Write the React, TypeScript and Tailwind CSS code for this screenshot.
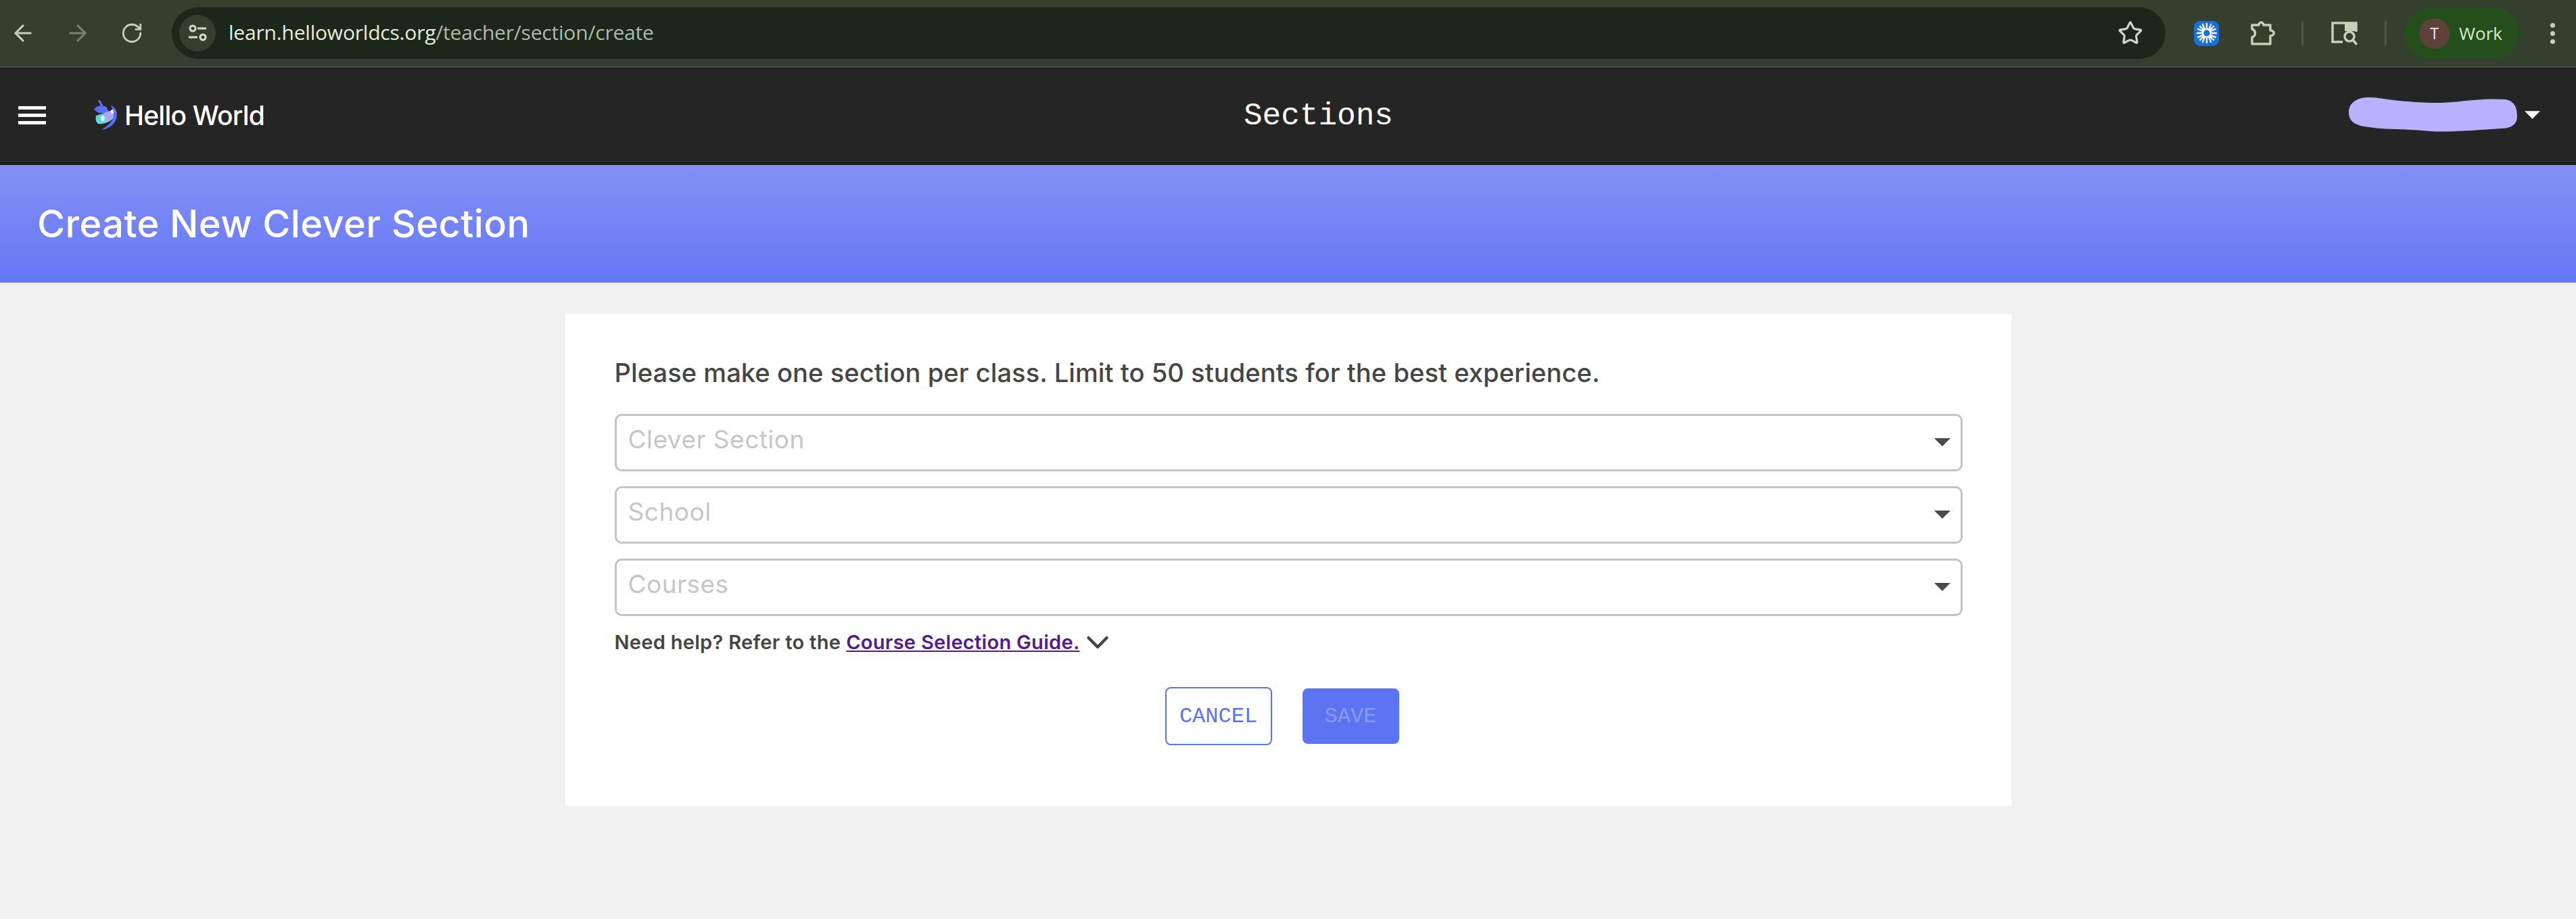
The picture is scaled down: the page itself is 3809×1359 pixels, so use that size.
import { ArrowLeft, ArrowRight, ChevronDown, RotateCw, Star } from 'lucide-react';

const SELECTS = ['Clever Section', 'School', 'Courses'];

function Caret({ className }: { className: string }) {
  return (
    <svg className={className} viewBox="0 0 24 12">
      <path d="M0 0H24L12 12Z" fill="currentColor" />
    </svg>
  );
}

function BrowserBar() {
  return (
    <div className="flex h-[100px] items-center border-b-2 border-[#474f3f] bg-[#343f2d] text-[#c3d1b8]">
      <ArrowLeft className="ml-[15px] h-[38px] w-[38px]" strokeWidth={2} />
      <ArrowRight className="ml-[43px] h-[38px] w-[38px] text-[#76846d]" strokeWidth={2} />
      <RotateCw className="ml-[44px] h-[34px] w-[34px]" strokeWidth={2} />
      {/* omnibox */}
      <div className="ml-[42px] flex h-[76px] flex-[0_0_2948px] items-center rounded-full bg-[#1d2719] pl-[11px] pr-[33px]">
        <div className="flex h-[54px] w-[54px] items-center justify-center rounded-full bg-[#343f2d]">
          <svg className="h-[30px] w-[30px]" viewBox="0 0 30 30" fill="none" stroke="#d5e0cc" strokeWidth="3">
            <circle cx="8" cy="8" r="4" />
            <path d="M15 8H28M2 21H15" />
            <circle cx="23" cy="21" r="4" />
          </svg>
        </div>
        <span className="-mt-[2px] ml-[19px] font-['Open_Sans',sans-serif] text-[30px] leading-none tracking-[-0.2px] text-[#aeb9a6]">
          <span className="text-[#e4eddc]">learn.helloworldcs.org</span>/teacher/section/create
        </span>
        <Star className="ml-auto h-[38px] w-[38px] text-[#d0d6cb]" strokeWidth={2} />
      </div>
      {/* toolbar */}
      <div className="ml-[42px] flex h-[37px] w-[37px] items-center justify-center rounded-[9px] bg-[#1a6fe0]">
        <svg className="h-[32px] w-[32px]" viewBox="0 0 30 30" stroke="#fff" strokeWidth="2.200" fill="none">
          <circle cx="15" cy="15" r="5.500" />
          <path d="M15 1V9M15 21V29M1 15H9M21 15H29M5 5L10.500 10.500M19.500 19.500L25 25M25 5L19.500 10.500M10.500 19.500L5 25M9 2L12 9.500M18 20.500L21 28M21 2L18 9.500M12 20.500L9 28M2 9L9.500 12M20.500 18L28 21M2 21L9.500 18M20.500 12L28 9" />
        </svg>
      </div>
      <svg className="ml-[46px] h-[37px] w-[38px]" viewBox="0 0 38 37" fill="none" stroke="#c3d1b8" strokeWidth="3.500" strokeLinejoin="round">
        <path d="M3 6H13C13 1 20 1 20 6H30V14C37 14 37 22 30 22V34H3V24C9 22 9 14 3 12Z" />
      </svg>
      <div className="ml-[38px] h-[36px] w-[3px] rounded-full bg-[#4e5a45]" />
      <svg className="ml-[40px] h-[36px] w-[42px]" viewBox="0 0 42 36" fill="none" stroke="#c3d1b8" strokeWidth="3.500">
        <path d="M18 31H3V3H38V16" />
        <path d="M21 2H39V15H21Z" fill="#c3d1b8" stroke="none" />
        <circle cx="28" cy="23" r="7" />
        <path d="M33 28L39 35" />
      </svg>
      <div className="ml-[38px] h-[36px] w-[3px] rounded-full bg-[#4e5a45]" />
      <div className="ml-[26px] flex h-[76px] w-[171px] items-center rounded-full bg-[#244f1c] pl-[22px]">
        <div className="flex h-[45px] w-[45px] items-center justify-center rounded-full bg-[#5e4239] font-['Open_Sans',sans-serif] text-[24px] text-[#f3e6e0]">
          T
        </div>
        <span className="ml-[14px] font-['Open_Sans',sans-serif] text-[26px] text-[#d6e8cb]">Work</span>
      </div>
      <div className="ml-[45px] flex flex-col gap-[5px]">
        <div className="h-[7px] w-[7px] rounded-full bg-[#c3d1b8]" />
        <div className="h-[7px] w-[7px] rounded-full bg-[#c3d1b8]" />
        <div className="h-[7px] w-[7px] rounded-full bg-[#c3d1b8]" />
      </div>
    </div>
  );
}

function Logo() {
  return (
    <svg className="h-[44px] w-[36px]" viewBox="0 0 36 44">
      <path d="M8 0L14 10" stroke="#5b70f0" strokeWidth="3" />
      <path d="M1 14C4 8 14 6 20 11L24 20L8 19Z" fill="#5b70f0" />
      <path d="M4 23L30 15V26C26 32 16 36 7 35C4 33 3 28 4 23Z" fill="#5fd8e4" />
      <path d="M16 19L30 14V26C28 29 24 31 20 32Z" fill="#a9a6f2" />
      <path d="M26 8C34 10 38 22 32 32C28 39 20 43 12 44C22 38 32 30 30 18Z" fill="#5b70f0" />
      <ellipse cx="14" cy="27" rx="2.500" ry="4" fill="#fff" />
      <ellipse cx="28" cy="17" rx="2" ry="3" fill="#fff" />
    </svg>
  );
}

function AppHeader() {
  return (
    <div className="flex h-[144px] items-center border-b-4 border-[#1e1e1e] bg-[#252525] text-white">
      <div className="flex w-[1839px] shrink-0 items-center">
        <div className="ml-[27px] flex w-[41px] flex-col gap-[6px]">
          <div className="h-[5px] bg-white" />
          <div className="h-[5px] bg-white" />
          <div className="h-[5px] bg-white" />
        </div>
        <div className="ml-[70px] flex items-center">
          <Logo />
          <span className="ml-[10px] font-['Inter',sans-serif] text-[39px] font-medium leading-none tracking-[-0.8px]">
            Hello World
          </span>
        </div>
      </div>
      <h1 className="mt-[3px] font-['Liberation_Mono',monospace] text-[46px] font-normal leading-none">Sections</h1>
      <div className="ml-auto mr-[53px] flex items-center">
        <svg className="h-[52px] w-[249px]" viewBox="0 0 249 52">
          <path
            d="M0 22C0 8 12 0 30 0C50 0 60 6 120 8C160 9 190 0 230 3C244 4 249 14 249 28C249 40 240 46 225 46C190 48 150 52 120 50C90 46 50 48 30 44C10 42 0 36 0 22Z"
            fill="#bbb0fd"
          />
        </svg>
        <Caret className="ml-[11px] h-[12px] w-[23px] text-white" />
      </div>
    </div>
  );
}

function SelectRow({ label }: { label: string }) {
  return (
    <div className="flex h-[84.5px] items-center justify-between rounded-[10px] border-[3px] border-[#c4c4c4] bg-white pl-[17px] pr-[15px]">
      <span className="-mt-[10px] text-[37px] leading-none tracking-[0.5px] text-[#c6c6c6]">{label}</span>
      <Caret className="h-[12px] w-[24px] text-[#4a4a4a]" />
    </div>
  );
}

export default function App() {
  return (
    <div className="min-h-[1359px] bg-[#f1f1f1] font-['Inter',sans-serif]">
      <BrowserBar />
      <AppHeader />
      <div className="flex h-[174px] items-center bg-gradient-to-b from-[#8490f6] to-[#6577f5] pl-[55px]">
        <h2 className="text-[56px] font-medium leading-none tracking-[0.4px] text-white">Create New Clever Section</h2>
      </div>
      <div className="mx-auto mt-[46px] h-[728px] w-[2138px] bg-white pl-[73px] pr-[72px] pt-[62px]">
        <p className="text-[38px] font-medium leading-[50px] tracking-[0.1px] text-[#454545]">
          Please make one section per class. Limit to 50 students for the best experience.
        </p>
        <div className="mt-[36px] flex flex-col gap-[22.5px]">
          {SELECTS.map(label => (
            <SelectRow key={label} label={label} />
          ))}
        </div>
        <div className="mt-[20px] flex items-center text-[29px] font-semibold leading-[38px] tracking-[0.3px] text-[#454545]">
          <span>Need help? Refer to the</span>
          <a className="ml-[8px] text-[#551a8b] underline">Course Selection Guide.</a>
          <ChevronDown className="-my-[8px] h-[54px] w-[54px] text-[#454545]" strokeWidth={2} />
        </div>
        <div className="mt-[47px] flex items-center justify-center gap-[45px] pr-[19px] font-['Liberation_Mono',monospace] text-[32px]">
          <button className="h-[86px] w-[158px] rounded-[8px] border-2 border-[#5c73f2] bg-white pt-[3px] text-[#5c73f2]">
            CANCEL
          </button>
          <button className="h-[82px] w-[143px] rounded-[8px] bg-[#5c73f2] pt-[3px] text-[#8a9bf5]">SAVE</button>
        </div>
      </div>
    </div>
  );
}
